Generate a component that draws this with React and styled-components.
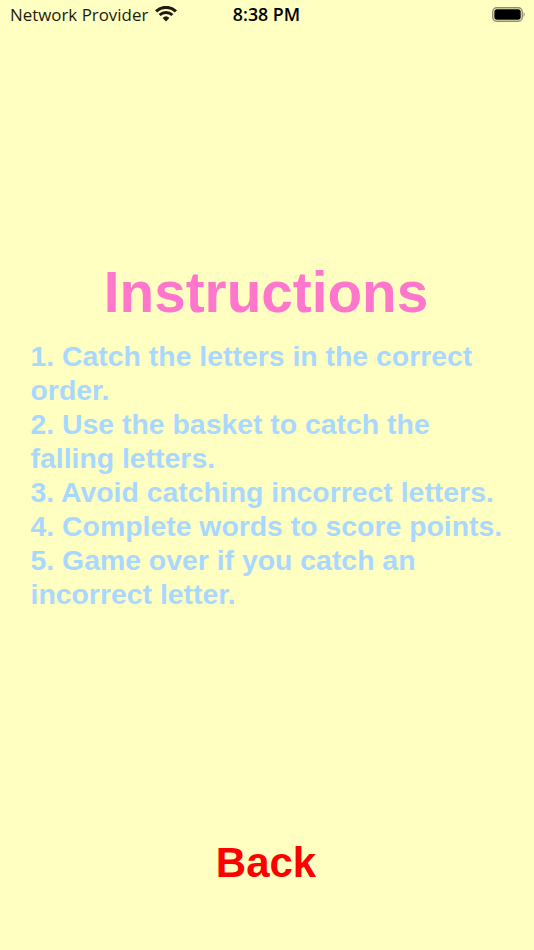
import React from "react";
import styled, { createGlobalStyle } from "styled-components";

const Global = createGlobalStyle`
  html, body { margin: 0; padding: 0; background: #ffffc2; }
`;

const Screen = styled.div`
  width: 534px;
  height: 950px;
  background: #ffffc2;
  display: flex;
  flex-direction: column;
  overflow: hidden;
  font-family: "Liberation Sans", Arial, sans-serif;
`;

const StatusBar = styled.div`
  height: 28px;
  display: grid;
  grid-template-columns: 1fr auto 1fr;
  align-items: center;
  padding: 0 9px 0 8px;
  color: #000;
`;

const Carrier = styled.div`
  display: flex;
  align-items: center;
  gap: 7px;
  margin-left: 2px;
  font-family: "Open Sans", sans-serif;
  font-size: 16.9px;
  color: #1c1c10;
`;

const Clock = styled.div`
  font-family: "Open Sans", sans-serif;
  font-weight: 600;
  font-size: 17.8px;
`;

const BatteryWrap = styled.div`
  justify-self: end;
  display: flex;
`;

const Main = styled.main`
  flex: 1;
  display: flex;
  flex-direction: column;
  align-items: center;
  padding: 233px 2px 0 0;
`;

const Title = styled.h1`
  margin: 0;
  font-size: 56.7px;
  line-height: 64px;
  font-weight: 700;
  color: #ff77cc;
`;

const Steps = styled.div`
  align-self: flex-start;
  width: 480px;
  margin: 14px 0 0 30.5px;
  font-size: 28.4px;
  line-height: 34px;
  font-weight: 700;
  color: #a8d8ff;
`;

const Back = styled.button`
  margin-top: 227px;
  border: 0;
  background: none;
  padding: 0;
  font: 700 42px/50px "Liberation Sans", Arial, sans-serif;
  color: #ff0000;
`;

const Wifi = () => (
  <svg width="22" height="16" viewBox="0 0 22 16">
    <path d="M11 15.5 7.6 11.9a5 5 0 0 1 6.8 0Z" fill="#1c1c10" />
    <path d="M5.6 10 3.6 7.9a10.8 10.8 0 0 1 14.8 0l-2 2.1a8 8 0 0 0-10.8 0Z" fill="#1c1c10" />
    <path d="M2.2 6.4 0 4.2a16 16 0 0 1 22 0l-2.2 2.2a13 13 0 0 0-17.6 0Z" fill="#1c1c10" />
  </svg>
);

const Battery = () => (
  <svg width="33" height="15" viewBox="0 0 33 15">
    <rect x="0.75" y="0.75" width="29.5" height="13.5" rx="4" fill="none" stroke="#8e8e70" strokeWidth="1.4" />
    <rect x="2.3" y="2.3" width="26.4" height="10.4" rx="2.6" fill="#000" />
    <path d="M31.5 5.2c1 .3 1.3 1.2 1.3 2.3s-.3 2-1.3 2.3Z" fill="#a5a585" />
  </svg>
);

export default function App() {
  return (
    <Screen>
      <Global />
      <StatusBar>
        <Carrier>
          Network Provider
          <Wifi />
        </Carrier>
        <Clock>8:38 PM</Clock>
        <BatteryWrap>
          <Battery />
        </BatteryWrap>
      </StatusBar>
      <Main>
        <Title>Instructions</Title>
        <Steps>
          1. Catch the letters in the correct order.
          <br />
          2. Use the basket to catch the falling letters.
          <br />
          3. Avoid catching incorrect letters.
          <br />
          4. Complete words to score points.
          <br />
          5. Game over if you catch an incorrect letter.
        </Steps>
        <Back>Back</Back>
      </Main>
    </Screen>
  );
}
